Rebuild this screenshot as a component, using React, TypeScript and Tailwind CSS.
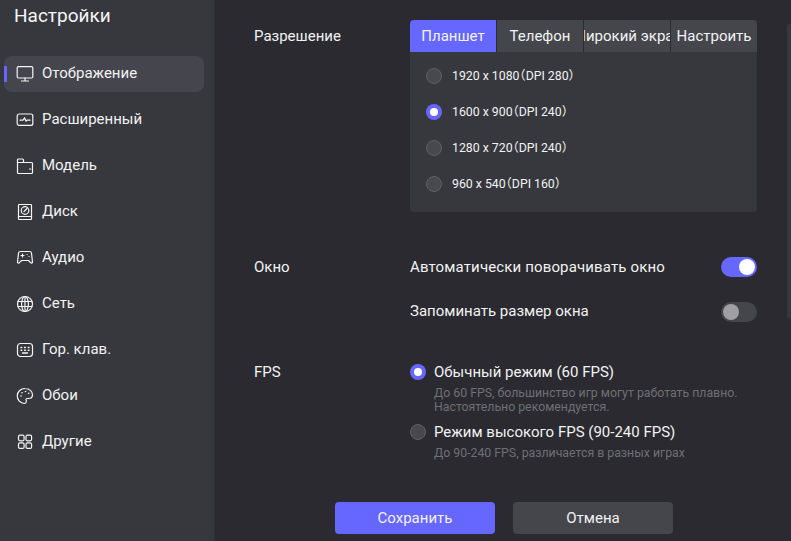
import React from "react";

const I = ({ children }: { children: React.ReactNode }) => (
  <svg width="18" height="18" viewBox="0 0 18 18" fill="none" stroke="#f5f5f5" strokeWidth="1.2" strokeLinecap="round" strokeLinejoin="round" className="shrink-0">
    {children}
  </svg>
);

const items: [string, React.ReactNode][] = [
  ["Отображение", <I><rect x="1.2" y="1.6" width="15.6" height="11.4" rx="1.2" /><path d="M9 13v3M5.5 16h7" /></I>],
  ["Расширенный", <I><rect x="1.2" y="3" width="15.6" height="11.4" rx="2" /><path d="M4 9.2h3l1.5-2.5 1.5 3.5 1-1h3" /></I>],
  ["Модель", <I><path d="M1.5 15.5V3a1 1 0 0 1 1-1h4a1 1 0 0 1 1 1v2.5h8a1 1 0 0 1 1 1v9a1 1 0 0 1-1 1h-13a1 1 0 0 1-1-1z" /><path d="M1.5 5.5h6M13.5 12h1.2" /></I>],
  ["Диск", <I><rect x="2.5" y="1.5" width="13" height="15" rx="0.8" /><path d="M2.5 13.5h13" /><circle cx="9" cy="7.5" r="3.8" /><path d="M8 8.5l3-3" /></I>],
  ["Аудио", <I><path d="M4.5 2.5h9a2 2 0 0 1 2 1.7l1 8.8a1 1 0 0 1-1.7.8l-2.3-2.3h-7l-2.3 2.3a1 1 0 0 1-1.7-.8l1-8.8a2 2 0 0 1 2-1.7z" /><path d="M5 6.5h3M6.5 5v3M11 5.5h.1M13 7.5h.1" /></I>],
  ["Сеть", <I><circle cx="9" cy="9" r="7.5" /><ellipse cx="9" cy="9" rx="3.4" ry="7.5" /><path d="M2 6.5h14M2 11.5h14M9 1.5v15" /></I>],
  ["Гор. клав.", <I><rect x="1.5" y="2.5" width="15" height="13" rx="3" /><path d="M5 6.5h.8M8.6 6.5h.8M12.2 6.5h.8M5 9.2h.8M8.6 9.2h.8M12.2 9.2h.8M6.5 12h5" strokeWidth="1.4" /></I>],
  ["Обои", <I><path d="M9 1.5c4.4 0 7.5 2.9 7.5 6.3 0 2.4-1.9 3.7-3.8 3.7h-1.5c-1 0-1.5.8-1.1 1.6.5 1 .2 3.4-1.6 3.4a7.5 7.5 0 0 1 .5-15z" /><path d="M5 9h.1M6 5.8h.1M9.5 4.5h.1M12.7 6.2h.1" strokeWidth="1.6" /></I>],
  ["Другие", <I><rect x="2.5" y="2.2" width="5.6" height="5.6" rx="1.5" /><rect x="10" y="2.2" width="5.6" height="5.6" rx="1.5" /><rect x="2.5" y="9.8" width="5.6" height="5.6" rx="1.5" /><rect x="10" y="9.8" width="5.6" height="5.6" rx="1.5" /></I>],
];

const Radio = ({ on }: { on?: boolean }) =>
  on ? (
    <span className="w-4 h-4 rounded-full bg-[#6667ff] flex items-center justify-center shrink-0">
      <span className="w-2 h-2 rounded-full bg-white" />
    </span>
  ) : (
    <span className="w-4 h-4 rounded-full bg-[#48494f] border border-[#606166] shrink-0" />
  );

const res = [
  "1920 x 1080（DPI 280）",
  "1600 x 900（DPI 240）",
  "1280 x 720（DPI 240）",
  "960 x 540（DPI 160）",
];

export default function App() {
  return (
    <div className="w-[791px] h-[541px] flex overflow-hidden relative bg-[#2a2a30] text-[15px] text-[#f2f2f2] font-['Roboto','Noto_Sans_CJK_SC',sans-serif]">
      <aside className="w-[215px] shrink-0 bg-[#37383e] border-r border-[#2f3036] pt-[4px] px-[4px]">
        <h1 className="text-[19px] leading-[24px] pl-[10px] font-normal text-[#f5f5f5]">Настройки</h1>
        <nav className="mt-[28px] flex flex-col gap-[10px] w-[200px]">
          {items.map(([t, ic], i) => (
            <div key={t} className={`h-[36px] flex items-center relative rounded-[8px] pl-[12px] gap-[8px] ${i === 0 ? "bg-[#44454d]" : ""}`}>
              {i === 0 && <span className="absolute left-0 top-[10px] w-[3px] h-[16px] bg-[#6667ff]" />}
              {ic}
              <span className="relative top-[-1px]">{t}</span>
            </div>
          ))}
        </nav>
      </aside>

      <main className="flex-1 flex flex-col pt-[20px]">
        <section className="flex ml-[39px]">
          <div className="w-[156px] pt-[7px] leading-[18px]">Разрешение</div>
          <div className="w-[347px] h-[192px] bg-[#37383e] rounded-[4px] overflow-hidden">
            <div className="flex h-[32px] gap-px bg-[#2a2a30]">
              {["Планшет", "Телефон", "Широкий экран", "Настроить"].map((t, i) => (
                <div key={t} className={`flex-1 min-w-0 overflow-hidden flex items-center justify-center whitespace-nowrap ${i === 0 ? "bg-[#6667ff]" : "bg-[#45464c]"}`}>
                  {t}
                </div>
              ))}
            </div>
            <div className="flex flex-col pt-[6px] pl-[16px]">
              {res.map((r, i) => (
                <div key={r} className="h-[36px] flex items-center gap-[10px] text-[12.3px]">
                  <Radio on={i === 1} />
                  <span className="whitespace-nowrap [font-feature-settings:'halt']">{r}</span>
                </div>
              ))}
            </div>
          </div>
        </section>

        <section className="flex ml-[39px] mt-[45px]">
          <div className="w-[156px] pt-px leading-[18px]">Окно</div>
          <div className="w-[347px] flex flex-col gap-[24px]">
            <div className="flex items-center justify-between h-[20px]">
              <span className="tracking-[0.14px]">Автоматически поворачивать окно</span>
              <span className="w-[36px] h-[20px] rounded-full bg-[#6667ff] flex items-center justify-end pr-[2px]">
                <span className="w-4 h-4 rounded-full bg-white" />
              </span>
            </div>
            <div className="flex items-center justify-between h-[20px]">
              <span>Запоминать размер окна</span>
              <span className="w-[36px] h-[20px] rounded-full bg-[#45464c] flex items-center pl-[2px] relative top-px">
                <span className="w-4 h-4 rounded-full bg-[#a09fa3]" />
              </span>
            </div>
          </div>
        </section>

        <section className="flex ml-[39px] mt-[41px]">
          <div className="w-[156px] pt-px leading-[18px]">FPS</div>
          <div className="w-[347px] flex flex-col">
            <div className="flex items-center gap-[8px] h-[20px]">
              <Radio on />
              <span>Обычный режим (60 FPS)</span>
            </div>
            <p className="pl-[24px] mt-[4px] text-[12.3px] leading-[14px] text-[#6f7074]">
              До 60 FPS, большинство игр могут работать плавно.
              <br />
              Настоятельно рекомендуется.
            </p>
            <div className="flex items-center gap-[8px] h-[20px] mt-[8px]">
              <Radio />
              <span>Режим высокого FPS (90-240 FPS)</span>
            </div>
            <p className="pl-[24px] mt-[4px] text-[12.3px] leading-[14px] text-[#6f7074]">
              До 90-240 FPS, различается в разных играх
            </p>
          </div>
        </section>

        <footer className="flex justify-center gap-[18px] mt-[42px] pl-[2px]">
          <button className="w-[160px] h-[32px] rounded-[4px] bg-[#6667ff]">Сохранить</button>
          <button className="w-[160px] h-[32px] rounded-[4px] bg-[#45464c]">Отмена</button>
        </footer>
      </main>

      <span className="absolute right-0 top-[24px] w-[4px] h-[294px] rounded-l-[2px] bg-[#37383e]" />
    </div>
  );
}
